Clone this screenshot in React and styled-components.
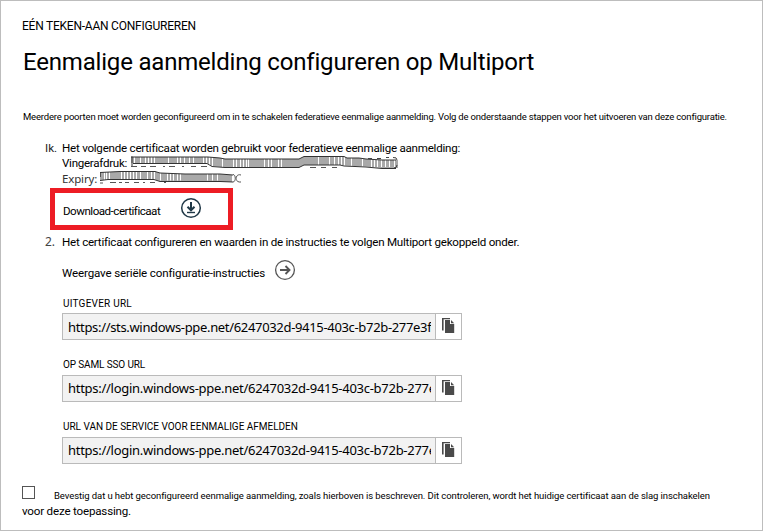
import React from "react";
import styled, { createGlobalStyle } from "styled-components";

const Global = createGlobalStyle`
  * { box-sizing: border-box; }
  body { margin: 0; background: #fff; }
`;

const Page = styled.main`
  width: 763px;
  height: 531px;
  border: 1px solid #bdbdbd;
  padding: 17px 0 0 21px;
  background: #fff;
  color: #000;
  font-family: Roboto, "Liberation Sans", sans-serif;
  overflow: hidden;
`;

const Line = styled.div`
  height: ${(p) => p.$h || 16}px;
  line-height: ${(p) => p.$h || 16}px;
  font-size: ${(p) => p.$size || 11.6}px;
  letter-spacing: ${(p) => p.$track || 0}px;
  white-space: nowrap;
`;

const Overline = styled(Line).attrs({ $size: 12, $track: -0.23 })``;

const Title = styled.h1`
  margin: 12px 0 0 1px;
  height: 32px;
  line-height: 32px;
  font-size: 24px;
  font-weight: 400;
  letter-spacing: -0.19px;
  white-space: nowrap;
`;

const Intro = styled(Line)`
  margin-top: 32px;
  margin-left: 1px;
`;

const Steps = styled.ol`
  list-style: none;
  margin: 16px 0 0;
  padding: 0;
`;

const Step = styled.li`
  display: grid;
  grid-template-columns: 17px 1fr;
  padding-left: 23px;
  margin-top: ${(p) => p.$gap || 0}px;
`;

const Marker = styled(Line)`
  color: ${(p) => p.$color || "#222"};
  font-family: ${(p) => (p.$humanist ? '"Noto Sans", sans-serif' : "inherit")};
`;

const Detail = styled.div`
  display: flex;
  height: 15px;
`;

const DetailLabel = styled(Line)`
  width: ${(p) => p.$w}px;
  flex: none;
  color: ${(p) => p.$color || "#000"};
  font-family: ${(p) => (p.$humanist ? '"Noto Sans", sans-serif' : "inherit")};
`;

const Scribble = styled.svg`
  display: block;
  flex: none;
  overflow: visible;
`;

const DownloadBox = styled.div`
  width: 183px;
  height: 42px;
  margin: 2px 0 0 -12px;
  border: 5px solid #ed1c24;
  padding: 4px 0 0 8px;
  display: flex;
  align-items: flex-start;
`;

const ActionRow = styled.div`
  display: flex;
  height: 22px;
  margin-top: 9px;
`;

const ActionText = styled(Line)`
  width: ${(p) => p.$w}px;
  margin-top: ${(p) => p.$top}px;
  flex: none;
`;

const IconButton = styled.button`
  width: 22px;
  height: 22px;
  padding: 0;
  border: 0;
  background: none;
  flex: none;
  svg { display: block; }
`;

const Field = styled.div`
  margin-top: ${(p) => p.$gap}px;
`;

const FieldLabel = styled(Line)`
  margin-bottom: ${(p) => p.$space || 3}px;
  padding-left: 1px;
  width: 400px;
`;

const FieldRow = styled.div`
  display: flex;
  width: 400px;
  height: 27px;
  border: 1px solid #bababa;
`;

const UrlValue = styled.div`
  width: 373px;
  padding-left: 5px;
  background: #f2f2f2;
  border-right: 1px solid #bababa;
`;

const UrlClip = styled.div`
  width: 363px;
  height: 25px;
  line-height: ${(p) => p.$lh}px;
  overflow: hidden;
  white-space: nowrap;
  font-family: "Noto Sans", sans-serif;
  font-size: 13px;
  letter-spacing: ${(p) => p.$track}px;
`;

const CopyButton = styled.button`
  display: flex;
  align-items: flex-start;
  flex: 1;
  padding: 4px 0 0 6px;
  border: 0;
  background: #fff;
`;

const Confirm = styled.div`
  display: grid;
  grid-template-columns: 32px 1fr;
  margin-top: 22px;
`;

const Checkbox = styled.span`
  width: 13px;
  height: 13px;
  border: 1px solid #555;
`;

const ConfirmText = styled(Line)`
  margin-top: 3px;
`;

const DownloadIcon = () => (
  <svg width="22" height="22" viewBox="0 0 22 22" fill="none" stroke="#203847">
    <circle cx="11" cy="11" r="9.3" strokeWidth="1.5" />
    <path d="M11 5v8M7.5 9.7l3.5 3.6 3.5-3.6" strokeWidth="2" />
    <path d="M7 15.5h8" strokeWidth="1.4" />
  </svg>
);

const ArrowIcon = () => (
  <svg width="22" height="22" viewBox="0 0 22 22" fill="none" stroke="#555">
    <circle cx="11" cy="11" r="9.4" strokeWidth="1.3" />
    <path d="M6 11h9M11.5 7l4 4-4 4" strokeWidth="1.9" />
  </svg>
);

const CopyIcon = () => (
  <svg width="13" height="16" viewBox="0 0 13 16">
    <path d="M0 0h8v1.2H1.6V12.6H0z" fill="#4a4a4a" />
    <path d="M3 2h5v4h4.2v9H3z" fill="#4a4a4a" />
    <path d="M9 2l3.2 3.2H9z" fill="#4a4a4a" />
  </svg>
);

const stripesA = [3, 9, 14, 17, 20, 23, 37, 46, 49, 53, 58, 62, 72, 75, 78, 81, 91, 102, 105, 109, 112, 115, 117, 133, 137, 140, 147, 150, 187, 198, 203, 207, 210, 213, 220, 231, 240, 243, 246, 250, 254, 258, 263];
const stripesB = [4, 6, 9, 21, 24, 27, 30, 33, 36, 40, 47, 51, 54, 60, 67, 70, 73, 77, 80, 107, 112, 117];

const ThumbprintScribble = () => (
  <Scribble width="268" height="15" viewBox="0 0 268 15">
    <path d="M0 1H77L89 2L94 3H168L173 .5H213L216 2H228L235 3L251 4H267V12H251L235 10.5L213 9.5L209 9H173L168 11.5H94L81 10L76 7H0z" fill="#a9a9a9" />
    {stripesA.map((x) => <path key={x} d={`M${x + 0.5} 1V11`} stroke="#fff" />)}
    <path d="M1 .5V11M0 1H77L89 2L94 3H168L173 .5H213L216 2H228L235 3L251 4H265M2 7.5H76L81 10.5L94 11.5H168L173 9H209L213 10L235 11L251 12.5H265" fill="none" stroke="#333" />
    <path d="M0 10.5H6M10 10.5H15M19 10.5H25M32 10.5H34M38 10.5H44M51 10.5H53M60 10.5H65M70 10.5H76M179 11.5H185M190 11.5H195M201 11.5H206" stroke="#555" />
    <path d="M237 2.5H241M246 2.5H250M255 1.5H258M262 1.5Q266 1 266 4M266 9Q266 12 263 12" fill="none" stroke="#444" />
  </Scribble>
);

const ExpiryScribble = () => (
  <Scribble width="142" height="15" viewBox="0 0 142 15">
    <path d="M0 1.5L20 .5H55L60 2L85 3H120L132 4V11H120L60 10.5L55 8.5H8L0 9.5z" fill="#a9a9a9" />
    {stripesB.map((x) => <path key={x} d={`M${x + 0.5} 1V9.5`} stroke="#fff" />)}
    <path d="M0 1.5L20 .5H55L60 2L85 3H120L133 4M0 9.5L8 8.5H54L60 10.5H120L133 11" fill="none" stroke="#333" />
    <path d="M.5 2V6M0 12H3M10 11.5H16M19 11.5H22M25 11.5H29M34 11.5H39M43 11.5H45M50 11.5H55M64 11.5H66" fill="none" stroke="#555" />
    <path d="M133 3.5C136 3.5 136 11 133 11M141 4C135 2 134 12 141 11" fill="none" stroke="#555" />
  </Scribble>
);

const UrlField = ({ label, track, url, urlTrack, gap, space, lh }) => (
  <Field $gap={gap}>
    <FieldLabel $h={14} $size={10} $track={track} $space={space}>{label}</FieldLabel>
    <FieldRow>
      <UrlValue><UrlClip $lh={lh} $track={urlTrack}>{url}</UrlClip></UrlValue>
      <CopyButton aria-label="Kopiëren"><CopyIcon /></CopyButton>
    </FieldRow>
  </Field>
);

export default function App() {
  return (
    <>
      <Global />
      <Page>
        <Overline>EÉN TEKEN-AAN CONFIGUREREN</Overline>
        <Title>Eenmalige aanmelding configureren op Multiport</Title>
        <Intro $h={14} $size={9.5} $track={-0.187}>
          Meerdere poorten moet worden geconfigureerd om in te schakelen federatieve eenmalige aanmelding. Volg de onderstaande stappen voor het uitvoeren van deze configuratie.
        </Intro>
        <Steps>
          <Step>
            <Marker>Ik.</Marker>
            <div>
              <Line $track={-0.24}>Het volgende certificaat worden gebruikt voor federatieve eenmalige aanmelding:</Line>
              <Detail>
                <DetailLabel $w={69} $h={15} $track={-0.28}>Vingerafdruk:</DetailLabel>
                <ThumbprintScribble />
              </Detail>
              <Detail>
                <DetailLabel $w={38} $h={15} $size={11.5} $track={-0.15} $color="#333" $humanist>Expiry:</DetailLabel>
                <ExpiryScribble />
              </Detail>
              <DownloadBox>
                <ActionText $w={117} $top={6} $track={-0.5}>Download-certificaat</ActionText>
                <IconButton aria-label="Download"><DownloadIcon /></IconButton>
              </DownloadBox>
            </div>
          </Step>
          <Step $gap={4}>
            <Marker $size={12} $color="#444" $humanist>2.</Marker>
            <div>
              <Line $track={-0.24}>Het certificaat configureren en waarden in de instructies te volgen Multiport gekoppeld onder.</Line>
              <ActionRow>
                <ActionText $w={212} $top={6} $track={-0.15}>Weergave seriële configuratie-instructies</ActionText>
                <IconButton aria-label="Openen"><ArrowIcon /></IconButton>
              </ActionRow>
              <UrlField gap={16} space={2} lh={27} label="UITGEVER URL" track={0.24} urlTrack={-0.33} url="https://sts.windows-ppe.net/6247032d-9415-403c-b72b-277e3f" />
              <UrlField gap={18} lh={25} label="OP SAML SSO URL" track={-0.13} urlTrack={-0.28} url="https://login.windows-ppe.net/6247032d-9415-403c-b72b-277e" />
              <UrlField gap={18} lh={25} label="URL VAN DE SERVICE VOOR EENMALIGE AFMELDEN" track={-0.02} urlTrack={-0.28} url="https://login.windows-ppe.net/6247032d-9415-403c-b72b-277e" />
            </div>
          </Step>
        </Steps>
        <Confirm>
          <Checkbox role="checkbox" aria-checked="false" />
          <ConfirmText $h={14} $size={9.5} $track={-0.08}>
            Bevestig dat u hebt geconfigureerd eenmalige aanmelding, zoals hierboven is beschreven. Dit controleren, wordt het huidige certificaat aan de slag inschakelen
          </ConfirmText>
        </Confirm>
        <Line $track={-0.19}>voor deze toepassing.</Line>
      </Page>
    </>
  );
}
